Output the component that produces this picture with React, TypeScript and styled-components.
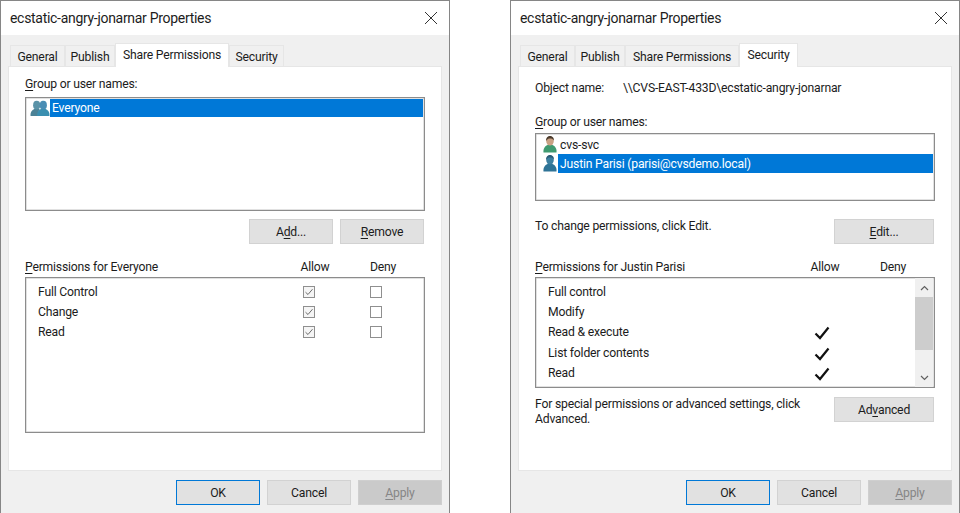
import { FC, ReactNode } from "react";
import styled, { createGlobalStyle } from "styled-components";

const GlobalStyle = createGlobalStyle`
  html, body {
    margin: 0;
    background: #fff;
    font-family: Roboto, "Noto Sans", sans-serif;
    font-size: 12.2px;
    letter-spacing: -0.2px;
    color: #1c1c1c;
    overflow: hidden;
  }
  u { text-underline-offset: 2px; text-decoration-thickness: 1px; }
`;

const Page = styled.div`
  display: flex;
  gap: 60px;
  width: 960px;
  height: 513px;
`;

const Window = styled.div`
  box-sizing: border-box;
  display: flex;
  flex-direction: column;
  width: 450px;
  height: 513px;
  border: 1px solid #868686;
  border-bottom: none;
  background: #f0f0f0;
`;

const TitleBar = styled.div`
  display: flex;
  align-items: center;
  justify-content: space-between;
  height: 34px;
  padding: 0 11px 0 9px;
  background: #fff;
`;

const Title = styled.span`
  font-size: 14px;
  letter-spacing: -0.3px;
`;

const TabStrip = styled.div`
  display: flex;
  align-items: flex-end;
  height: 31px;
  padding-left: 9px;
`;

const Tab = styled.div<{ $width: number; $active?: boolean }>`
  box-sizing: border-box;
  display: flex;
  align-items: center;
  justify-content: center;
  width: ${(p) => p.$width}px;
  height: ${(p) => (p.$active ? 24 : 22)}px;
  margin-bottom: -1px;
  padding-bottom: ${(p) => (p.$active ? 2 : 0)}px;
  border: 1px solid #e6e6e6;
  border-bottom: none;
  background: ${(p) => (p.$active ? "#fff" : "#f0f0f0")};
  position: relative;
  z-index: ${(p) => (p.$active ? 2 : 0)};
`;

const Panel = styled.div`
  box-sizing: border-box;
  width: 434px;
  height: 405px;
  margin-left: 7px;
  padding: 9px 16px 0;
  border: 1px solid #e6e6e6;
  background: #fff;
  position: relative;
  z-index: 1;
`;

const Label = styled.div<{ $top?: number }>`
  height: 16px;
  line-height: 16px;
  margin-top: ${(p) => p.$top ?? 0}px;
`;

const ObjectRow = styled.div`
  display: flex;
  height: 16px;
  line-height: 16px;
  margin-top: 4px;
`;

const ObjectKey = styled.span`
  width: 88px;
`;

const ListBox = styled.div<{ $height: number; $top: number }>`
  box-sizing: border-box;
  height: ${(p) => p.$height}px;
  margin-top: ${(p) => p.$top}px;
  padding-top: 1px;
  border: 1px solid #8c8c8c;
  box-shadow: inset 0 0 0 0.5px #c4c4c4;
`;

const ListRow = styled.div<{ $indent: number; $height: number; $line: number }>`
  display: flex;
  align-items: center;
  height: ${(p) => p.$height}px;
  line-height: ${(p) => p.$line}px;
  padding-left: ${(p) => p.$indent}px;
`;

const RowName = styled.span<{ $selected?: boolean }>`
  flex: 1;
  align-self: stretch;
  margin-right: 1px;
  padding-left: 2px;
  color: ${(p) => (p.$selected ? "#fff" : "inherit")};
  background: ${(p) => (p.$selected ? "#0078d7" : "transparent")};
`;

const ButtonRow = styled.div`
  display: flex;
  justify-content: flex-end;
  gap: 7px;
  margin-top: 8px;
  padding-right: 1px;
`;

const Button = styled.div<{ $width: number; $primary?: boolean; $disabled?: boolean }>`
  box-sizing: border-box;
  display: flex;
  align-items: center;
  justify-content: center;
  flex: none;
  width: ${(p) => p.$width}px;
  height: 25px;
  border: 1px solid ${(p) => (p.$primary ? "#0078d7" : p.$disabled ? "#cfcfcf" : "#d2d2d2")};
  background: ${(p) => (p.$disabled ? "#cacaca" : "#e1e1e1")};
  color: ${(p) => (p.$disabled ? "#868686" : "inherit")};
`;

const NoteRow = styled.div<{ $top: number }>`
  display: flex;
  justify-content: space-between;
  margin-top: ${(p) => p.$top}px;
  padding-right: 1px;
`;

const Note = styled.div`
  line-height: 15px;
`;

const PermHeader = styled.div`
  display: grid;
  grid-template-columns: 256px 68px 68px;
  height: 16px;
  line-height: 16px;
  margin-top: 15px;
`;

const HeaderCell = styled.span`
  text-align: center;
`;

const PermBox = styled.div<{ $height: number }>`
  box-sizing: border-box;
  display: flex;
  height: ${(p) => p.$height}px;
  margin-top: 2px;
  border: 1px solid #8c8c8c;
  box-shadow: inset 0 0 0 0.5px #c4c4c4;
`;

const PermList = styled.div`
  flex: 1;
  min-width: 0;
  padding: 3.4px 0 0 12px;
`;

const PermRow = styled.div<{ $allowWidth: number }>`
  display: grid;
  grid-template-columns: ${(p) => p.$allowWidth}px 66px 68px;
  align-items: center;
  height: 20.4px;
`;

const MarkCell = styled.span`
  display: flex;
  justify-content: center;
`;

const CheckBox = styled.span<{ $checked?: boolean }>`
  box-sizing: border-box;
  display: flex;
  align-items: center;
  justify-content: center;
  width: 12px;
  height: 12px;
  border: 1px solid #8f8f8f;
  background: ${(p) => (p.$checked ? "#f5f5f5" : "#fff")};
`;

const BoldMark = styled.svg`
  margin-top: 2px;
`;

const ScrollBar = styled.div`
  display: flex;
  flex: none;
  flex-direction: column;
  width: 18px;
  margin-right: 1px;
  background: #f0f0f0;
`;

const ScrollArrow = styled.div`
  display: flex;
  align-items: center;
  justify-content: center;
  height: 19px;
`;

const ScrollThumb = styled.div`
  height: 53px;
  background: #cdcdcd;
`;

const ScrollTrack = styled.div`
  flex: 1;
`;

const Footer = styled.div`
  display: flex;
  justify-content: flex-end;
  gap: 7px;
  padding: 9px 7px 0 0;
`;

const CloseIcon = () => (
  <svg width="14" height="14" viewBox="0 0 14 14">
    <path d="M1 1L13 13M13 1L1 13" stroke="#333" strokeWidth="1" fill="none" />
  </svg>
);

const Person: FC<{ head: string; body: string; hair?: string; x?: number; y?: number }> = ({ head, body, hair, x = 0, y = 0 }) => (
  <g transform={`translate(${x} ${y})`}>
    <path d="M1.500 17c-.5-4 1.500-6.500 4-7.500h5c2.500 1 4.500 3.500 4 7.500z" fill={body} />
    <ellipse cx="8" cy="5.500" rx="3.800" ry="4.600" fill={head} />
    {hair && <path d="M4.200 5.500c-.5-3.500 1.800-5 3.800-5s4.300 1.500 3.800 4.500c-1-1.800-2.300-2-3.800-2s-2.800.5-3.800 2.500z" fill={hair} />}
  </g>
);

const GroupIcon = () => (
  <svg width="20" height="17" viewBox="0 0 21 18">
    <Person head="#5b93a8" body="#4b8296" x={-1} />
    <path d="M9 17c0-5 1-7 3-8.500-1.500-2-1.500-6 1-8" stroke="#dce9ee" strokeWidth="0.800" fill="none" />
    <Person head="#4a8db4" body="#3a8fb0" x={6} />
  </svg>
);

const UserIcon: FC<{ tone: "green" | "blue" }> = ({ tone }) =>
  tone === "green" ? (
    <svg width="16" height="19" viewBox="0 0 16 18">
      <Person head="#c9a184" body="#3f9a70" hair="#4a3a2c" />
    </svg>
  ) : (
    <svg width="16" height="19" viewBox="0 0 16 18">
      <Person head="#3c7fa0" body="#2e7396" hair="#2b5d78" />
    </svg>
  );

const SmallCheck = () => (
  <svg width="10" height="10" viewBox="0 0 10 10">
    <path d="M1.500 5.200L4 7.500L8.500 2.200" stroke="#5c5c5c" strokeWidth="0.900" fill="none" />
  </svg>
);

const BoldCheck = () => (
  <BoldMark width="16" height="14" viewBox="0 0 16 14">
    <path d="M1.500 7.500L6 12L14.500 1.500" stroke="#111" strokeWidth="2.200" fill="none" />
  </BoldMark>
);

const Chevron: FC<{ up?: boolean }> = ({ up }) => (
  <svg width="9" height="6" viewBox="0 0 9 6">
    <path d={up ? "M1 5L4.500 1.500L8 5" : "M1 1L4.500 4.500L8 1"} stroke="#606060" strokeWidth="1.200" fill="none" />
  </svg>
);

const TABS = [
  { name: "General", width: 55 },
  { name: "Publish", width: 50 },
  { name: "Share Permissions", width: 114 },
  { name: "Security", width: 55 },
];

const DialogFooter = () => (
  <Footer>
    <Button $width={84} $primary>OK</Button>
    <Button $width={84}>Cancel</Button>
    <Button $width={84} $disabled><span><u>A</u>pply</span></Button>
  </Footer>
);

const Dialog: FC<{ active: string; children: ReactNode }> = ({ active, children }) => (
  <Window>
    <TitleBar>
      <Title>ecstatic-angry-jonarnar Properties</Title>
      <CloseIcon />
    </TitleBar>
    <TabStrip>
      {TABS.map((t) => (
        <Tab key={t.name} $width={t.name === "Security" && active === "Security" ? 59 : t.width} $active={t.name === active}>
          {t.name}
        </Tab>
      ))}
    </TabStrip>
    <Panel>{children}</Panel>
    <DialogFooter />
  </Window>
);

const SHARE_ROWS = ["Full Control", "Change", "Read"];
const SECURITY_ROWS = [
  { name: "Full control", allow: false },
  { name: "Modify", allow: false },
  { name: "Read & execute", allow: true },
  { name: "List folder contents", allow: true },
  { name: "Read", allow: true },
];

export default function App() {
  return (
    <Page>
      <GlobalStyle />
      <Dialog active="Share Permissions">
        <Label><u>G</u>roup or user names:</Label>
        <ListBox $height={114} $top={5}>
          <ListRow $indent={4} $height={18} $line={18}>
            <GroupIcon />
            <RowName $selected>Everyone</RowName>
          </ListRow>
        </ListBox>
        <ButtonRow>
          <Button $width={84}><span>A<u>d</u>d...</span></Button>
          <Button $width={84}><span><u>R</u>emove</span></Button>
        </ButtonRow>
        <PermHeader>
          <span><u>P</u>ermissions for Everyone</span>
          <HeaderCell>Allow</HeaderCell>
          <HeaderCell>Deny</HeaderCell>
        </PermHeader>
        <PermBox $height={156}>
          <PermList>
            {SHARE_ROWS.map((name) => (
              <PermRow key={name} $allowWidth={238}>
                <span>{name}</span>
                <MarkCell><CheckBox $checked><SmallCheck /></CheckBox></MarkCell>
                <MarkCell><CheckBox /></MarkCell>
              </PermRow>
            ))}
          </PermList>
        </PermBox>
      </Dialog>

      <Dialog active="Security">
        <ObjectRow>
          <ObjectKey>Object name:</ObjectKey>
          <span>\\CVS-EAST-433D\ecstatic-angry-jonarnar</span>
        </ObjectRow>
        <Label $top={18}><u>G</u>roup or user names:</Label>
        <ListBox $height={68} $top={3}>
          <ListRow $indent={6} $height={19} $line={21}>
            <UserIcon tone="green" />
            <RowName>cvs-svc</RowName>
          </ListRow>
          <ListRow $indent={6} $height={19} $line={21}>
            <UserIcon tone="blue" />
            <RowName $selected>Justin Parisi (parisi@cvsdemo.local)</RowName>
          </ListRow>
        </ListBox>
        <NoteRow $top={18}>
          <Note>To change permissions, click Edit.</Note>
          <Button $width={100}><span><u>E</u>dit...</span></Button>
        </NoteRow>
        <PermHeader>
          <span><u>P</u>ermissions for Justin Parisi</span>
          <HeaderCell>Allow</HeaderCell>
          <HeaderCell>Deny</HeaderCell>
        </PermHeader>
        <PermBox $height={111}>
          <PermList>
            {SECURITY_ROWS.map((r) => (
              <PermRow key={r.name} $allowWidth={241}>
                <span>{r.name}</span>
                <MarkCell>{r.allow && <BoldCheck />}</MarkCell>
                <MarkCell />
              </PermRow>
            ))}
          </PermList>
          <ScrollBar>
            <ScrollArrow><Chevron up /></ScrollArrow>
            <ScrollThumb />
            <ScrollTrack />
            <ScrollArrow><Chevron /></ScrollArrow>
          </ScrollBar>
        </PermBox>
        <NoteRow $top={9}>
          <Note>For special permissions or advanced settings, click<br />Advanced.</Note>
          <Button $width={100}><span>Ad<u>v</u>anced</span></Button>
        </NoteRow>
      </Dialog>
    </Page>
  );
}
